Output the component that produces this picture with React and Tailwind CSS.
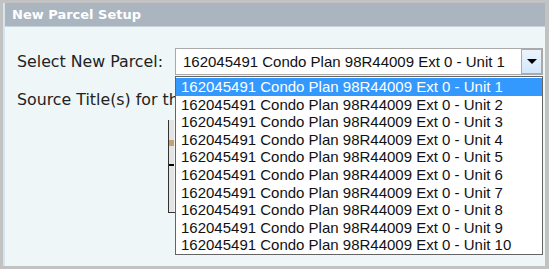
import React from "react";

const items = Array.from({ length: 10 }, (_, i) => `162045491 Condo Plan 98R44009 Ext 0 - Unit ${i + 1}`);

export default function App() {
  return (
    <div className="w-[549px] h-[269px] bg-[#c2c2c2] pt-[3px] pl-[3px] pr-[4px] pb-[3px] overflow-hidden">
      <div className="h-full flex flex-col bg-[#eef6f8] border-l-[2px] border-[#d6e4ee]">
        <div className="h-[24px] shrink-0 bg-[#aab5c0] text-white font-bold text-[13px] pl-[7px] flex items-center border-b border-[#c9d3dc]" style={{ fontFamily: '"DejaVu Sans", Verdana, sans-serif' }}>
          New Parcel Setup
        </div>
        <div className="flex-1 relative" style={{ fontFamily: '"DejaVu Sans", Verdana, sans-serif' }}>
          <div className="flex items-center pl-[12px] pt-[21px]">
            <div className="w-[158px] text-[15.8px] text-[#222]">Select New Parcel:</div>
            <div className="relative w-[368px] h-[27px] bg-white border border-[#a9a9a9] flex items-center z-10">
              <div className="flex-1 pl-[7px] text-[15px] text-[#111] leading-none" style={{ fontFamily: '"Liberation Sans", Arial, sans-serif' }}>
                {items[0]}
              </div>
              <div className="w-[21px] h-[25px] border border-[#7eb4ea] bg-gradient-to-b from-[#ecf5fd] to-[#d2e7fb] flex items-center justify-center">
                <div className="w-0 h-0 border-l-[5px] border-r-[5px] border-t-[5px] border-l-transparent border-r-transparent border-t-black" />
              </div>
              <div className="absolute left-[-1px] top-[27px] w-[368px] bg-white border border-[#646464] pt-[1px]" style={{ fontFamily: '"Liberation Sans", Arial, sans-serif' }}>
                {items.map((t, i) => (
                  <div key={i} className={`h-[17.6px] leading-[17.6px] text-[15px] pl-[5px] whitespace-nowrap ${i === 0 ? "bg-[#3399ff] text-white" : "text-[#111]"}`}>
                    {t}
                  </div>
                ))}
              </div>
            </div>
          </div>
          <div className="ml-[12px] mt-[13px] w-[158px] overflow-hidden text-[15.8px] text-[#222] whitespace-nowrap">
            Source Title(s) for the selected parcel:
          </div>
          <div className="ml-[163px] mt-[8px] w-[300px] h-[93px] border-l border-b border-[#333] bg-[#f4f4f4] flex">
            <div className="w-[5px] h-full bg-[#e4e4e4] flex flex-col">
              <div className="h-[20px]" />
              <div className="h-[6px] bg-[#c8a070]" />
              <div className="h-[18px]" />
              <div className="h-[2px] bg-black" />
            </div>
          </div>
        </div>
      </div>
    </div>
  );
}
